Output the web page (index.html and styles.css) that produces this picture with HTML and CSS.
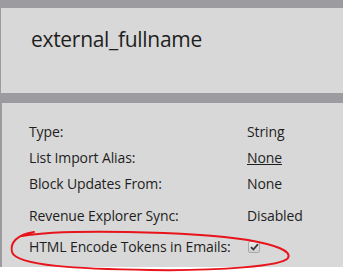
FILE: index.html
```html
<!DOCTYPE html>
<html>
<head>
<meta charset="utf-8">
<link rel="stylesheet" href="styles.css">
</head>
<body>
<div class="frame">
  <div class="panel head">
    <h1 class="title">external_fullname</h1>
  </div>
  <div class="panel props">
    <div class="row"><span class="label">Type:</span><span class="value">String</span></div>
    <div class="row"><span class="label">List Import Alias:</span><span class="value"><a class="link">None</a></span></div>
    <div class="row"><span class="label">Block Updates From:</span><span class="value">None</span></div>
    <div class="row gap1"><span class="label">Revenue Explorer Sync:</span><span class="value">Disabled</span></div>
    <div class="row gap2"><span class="label">HTML Encode Tokens in Emails:</span><span class="value"><span class="check"><svg width="9" height="8" viewBox="0 0 9 8"><path d="M1 4.2 L3.4 6.5 L8 1.2" fill="none" stroke="#3a3a3a" stroke-width="1.8"/></svg></span></span></div>
  </div>
</div>
<svg class="mark" width="343" height="275" viewBox="0 0 343 275">
  <path d="M22 236 C 60 229, 190 231, 248 240 C 276 245, 292 251, 288 258 C 283 266, 220 271, 150 270 C 80 269, 16 266, 12 252 C 10 243, 16 235, 34 232" fill="none" stroke="#e8141b" stroke-width="2" stroke-linecap="round"/>
</svg>
</body>
</html>
```
FILE: styles.css
```css
html, body {
  margin: 0;
  padding: 0;
  background: #ffffff;
}
body {
  position: relative;
  width: 343px;
  height: 275px;
  overflow: hidden;
  font-family: "Open Sans", "DejaVu Sans", sans-serif;
  color: #1e1e1e;
}
.frame {
  background: #9c9ba0;
  padding-top: 8px;
  display: flex;
  flex-direction: column;
  gap: 10px;
}
.panel {
  background: #d8d8d8;
}
.head {
  margin-left: 1px;
  height: 85px;
  box-sizing: border-box;
  padding: 17px 0 0 30px;
}
.title {
  margin: 0;
  font-size: 21px;
  font-weight: normal;
  line-height: 28px;
  letter-spacing: -0.3px;
}
.props {
  margin-left: 2px;
  height: 164px;
  box-sizing: border-box;
  padding: 15.5px 0 0 27px;
  font-size: 14px;
  letter-spacing: -0.12px;
}
.row {
  display: grid;
  grid-template-columns: 218px 1fr;
  line-height: 26px;
  height: 26px;
}
.gap1 { margin-top: 6px; }
.gap2 { margin-top: 5px; }
.link {
  text-decoration: underline;
  color: #1e1e1e;
}
.value {
  display: flex;
  align-items: center;
}
.check {
  width: 10px;
  height: 10px;
  border: 1px solid #a9a9a9;
  border-radius: 2px;
  background: linear-gradient(#ececec, #cfcfcf);
  display: flex;
  align-items: center;
  justify-content: center;
  margin-left: 1px;
}
.mark {
  position: absolute;
  left: 0;
  top: 0;
  pointer-events: none;
}
```
